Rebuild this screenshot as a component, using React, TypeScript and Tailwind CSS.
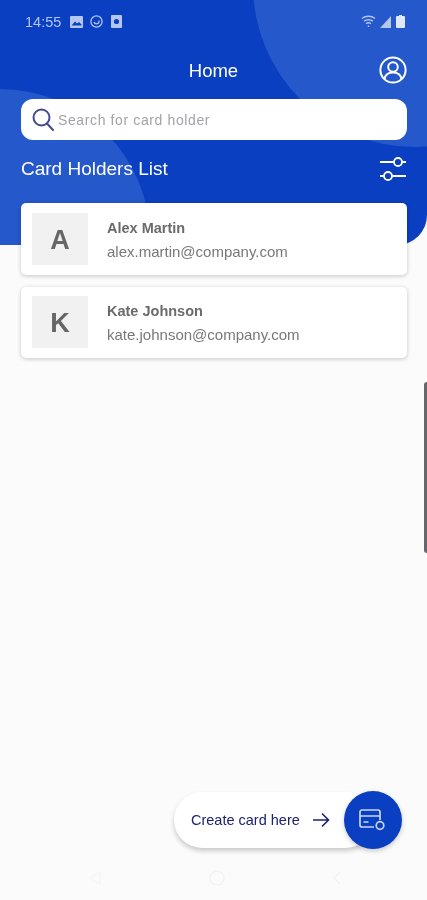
import React from "react";

function Person({ letter, name, email }: { letter: string; name: string; email: string }) {
  return (
    <div className="flex h-[71.5px] items-center rounded-[5px] bg-white pl-[11px] shadow-[0_1px_4px_rgba(0,0,0,0.22)]">
      <div className="flex h-[52px] w-[56px] items-center justify-center bg-[#f1f1f1] pt-[2px] text-[27px] font-bold text-[#666666]">{letter}</div>
      <div className="ml-[19px] flex flex-col pt-[2px]">
        <span className="text-[14.5px] font-bold leading-[18px] text-[#6b6b6b]">{name}</span>
        <span className="mt-[6px] text-[15px] leading-[18px] text-[#787878]">{email}</span>
      </div>
    </div>
  );
}

function StatusBar() {
  return (
    <div className="flex h-[42px] items-center justify-between pl-[25px] pr-[22px] pt-[1px]">
      <div className="flex items-center text-[#b4c5ee]">
        <span className="pt-[1px] text-[14.5px] leading-none">14:55</span>
        <svg className="ml-[9px]" width="13" height="12" viewBox="0 0 13 12"><rect width="13" height="12" rx="1" fill="currentColor" /><path d="M1.5 9.5 5 5.5l2 2 2-1.5 2.5 2.500v1z" fill="#0a3fc1" /></svg>
        <svg className="ml-[7px]" width="13" height="13" viewBox="0 0 13 13" fill="none" stroke="currentColor" strokeWidth="1.300"><circle cx="6.500" cy="6.500" r="5.600" /><path d="M4 7a2.600 2.600 0 0 0 5 0V5.500" /></svg>
        <svg className="ml-[8px]" width="11" height="13" viewBox="0 0 11 13"><rect width="11" height="13" rx="1" fill="currentColor" /><circle cx="5.500" cy="6.500" r="2.600" fill="#0a3fc1" /></svg>
      </div>
      <div className="flex items-center text-[#b4c5ee]">
        <svg width="15" height="13" viewBox="0 0 15 13" fill="none" stroke="currentColor" strokeWidth="1.400"><path d="M1 3.500c3.500-3 9.500-3 13 0M3 6.200c2.400-2 6.600-2 9 0M5 8.600c1.400-1 3.600-1 5 0" /><path d="M7.500 10.500v1.500" /></svg>
        <svg className="ml-[4px]" width="11" height="12" viewBox="0 0 11 12"><path d="M11 0v12H0z" fill="currentColor" /></svg>
        <svg className="ml-[5px]" width="9" height="13" viewBox="0 0 9 13"><path d="M3 0h3v1h2a1 1 0 0 1 1 1v10a1 1 0 0 1-1 1H1a1 1 0 0 1-1-1V2a1 1 0 0 1 1-1h2z" fill="#dfe7f8" /></svg>
      </div>
    </div>
  );
}

export default function App() {
  return (
    <div className="relative flex h-[900px] w-[427px] flex-col overflow-hidden bg-[#fbfbfb] font-['Liberation_Sans',Arial,sans-serif] blur-[0.6px]">
      <div className="absolute left-0 top-0 h-[245px] w-full overflow-hidden rounded-br-[30px] bg-[#0a3fc1]">
        <div className="absolute left-[253px] top-[-177px] h-[324px] w-[324px] rounded-full bg-[#2458cb]" />
        <div className="absolute left-[-150px] top-[89px] h-[300px] w-[300px] rounded-full bg-[#2458cb]" />
      </div>

      <div className="relative flex flex-col">
        <StatusBar />

        <div className="relative flex h-[57px] items-center justify-center">
          <span className="text-[18.5px] text-white">Home</span>
          <svg className="absolute right-[20px] top-[14px]" width="28" height="28" viewBox="0 0 28 28" fill="none" stroke="white" strokeWidth="2">
            <circle cx="14" cy="14" r="12.600" />
            <circle cx="14" cy="11" r="4.800" />
            <path d="M5.500 23.200c.6-4.400 4-6.800 8.500-6.800s7.900 2.400 8.500 6.800" />
          </svg>
        </div>

        <div className="ml-[21px] mr-[20px] flex h-[41px] items-center rounded-[12px] bg-white pl-[11px]">
          <svg width="22" height="23" viewBox="0 0 22 23" fill="none" stroke="#444a8c" strokeWidth="2">
            <circle cx="9.500" cy="9.500" r="8" />
            <path d="M15 15.500l6 6.500" strokeLinecap="round" />
          </svg>
          <span className="ml-[4px] pt-[2px] text-[14px] tracking-[0.62px] text-[#a3a3a8]">Search for card holder</span>
        </div>

        <div className="ml-[21px] mr-[20px] mt-[11px] flex h-[36px] items-center justify-between">
          <span className="text-[19px] text-white">Card Holders List</span>
          <svg width="28" height="26" viewBox="0 0 28 26" fill="none" stroke="white" strokeWidth="1.800">
            <path d="M1 6h14M23 6h4M1 20h4M13 20h14" />
            <circle cx="19" cy="6" r="4" />
            <circle cx="9" cy="20" r="4" />
          </svg>
        </div>

        <div className="ml-[21px] mr-[20px] mt-[16px] flex flex-col gap-[12px]">
          <Person letter="A" name="Alex Martin" email="alex.martin@company.com" />
          <Person letter="K" name="Kate Johnson" email="kate.johnson@company.com" />
        </div>
      </div>

      <div className="absolute right-0 top-[382px] h-[171px] w-[3px] rounded-l-[3px] bg-[#66666f]" />

      <div className="absolute left-[174px] top-[791px] flex h-[58px] w-[228px] items-center">
        <div className="flex h-[56px] w-[200px] items-center rounded-full bg-white pl-[17px] shadow-[0_3px_5px_rgba(0,0,0,0.2)]">
          <span className="text-[14.5px] leading-none text-[#1c2270]">Create card here</span>
          <svg className="ml-[12px]" width="18" height="16" viewBox="0 0 18 16" fill="none" stroke="#1c2270" strokeWidth="1.600">
            <path d="M1 8h15M10 1.500 16.500 8 10 14.500" />
          </svg>
        </div>
        <div className="absolute right-0 top-0 flex h-[58px] w-[58px] items-center justify-center rounded-full bg-[#0a3fc1] shadow-[0_2px_5px_rgba(0,0,0,0.2)]">
          <svg width="28" height="22" viewBox="0 0 28 22" fill="none" stroke="#c9d6f5" strokeWidth="1.700">
            <path d="M15 18H3a2 2 0 0 1-2-2V3a2 2 0 0 1 2-2h16a2 2 0 0 1 2 2v8" />
            <path d="M1 7h20M4.500 13h5" />
            <circle cx="21" cy="16.500" r="3.800" />
          </svg>
        </div>
      </div>

      <div className="absolute left-0 top-[871px] h-[14px] w-full">
        <svg className="absolute left-[89px] top-0" width="12" height="14" viewBox="0 0 12 14" fill="none" stroke="#f6f6f6" strokeWidth="1.500"><path d="M1 7l10-6v12z" /></svg>
        <svg className="absolute left-[209px] top-[-1px]" width="16" height="16" viewBox="0 0 16 16" fill="none" stroke="#f3f3f3" strokeWidth="1.500"><circle cx="8" cy="8" r="7" /></svg>
        <svg className="absolute left-[332px] top-0" width="10" height="14" viewBox="0 0 10 14" fill="none" stroke="#f3f3f3" strokeWidth="1.500"><path d="M8 1 2 7l6 6" /></svg>
      </div>
    </div>
  );
}
